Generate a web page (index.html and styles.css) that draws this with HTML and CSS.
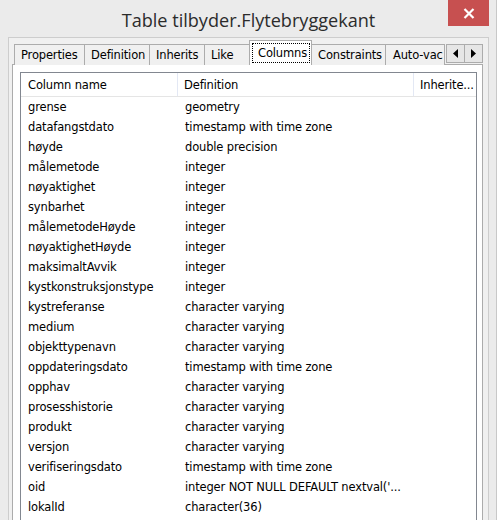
FILE: index.html
```html
<!DOCTYPE html>
<html>
<head>
<meta charset="utf-8">
<link rel="stylesheet" href="styles.css">
</head>
<body>
<div class="window">
  <div class="titlebar">
    <div class="title">Table tilbyder.Flytebryggekant</div>
    <div class="close">
      <svg width="12" height="11" viewBox="0 0 12 11"><path d="M1.5 1 L10.5 10 M10.5 1 L1.5 10" stroke="#fff" stroke-width="2.2" fill="none"/></svg>
    </div>
  </div>
  <div class="client">
    <div class="tabs">
      <div class="tab w-prop">Properties</div>
      <div class="tab w-def">Definition</div>
      <div class="tab w-inh">Inherits</div>
      <div class="tab w-like">Like</div>
      <div class="tab active"><span class="focus">Columns</span></div>
      <div class="tab w-con">Constraints</div>
      <div class="tab w-auto">Auto-vac</div>
      <div class="scroller">
        <div class="sbtn"><svg width="5" height="9" viewBox="0 0 5 9"><path d="M5 0 L0 4.5 L5 9Z" fill="#000"/></svg></div>
        <div class="sbtn"><svg width="5" height="9" viewBox="0 0 5 9"><path d="M0 0 L5 4.5 L0 9Z" fill="#000"/></svg></div>
      </div>
    </div>
    <div class="panel">
      <div class="list">
        <div class="header">
          <div class="hcell c1">Column name</div>
          <div class="hcell c2">Definition</div>
          <div class="hcell c3">Inherite...</div>
        </div>
        <div class="row"><div class="c1">grense</div><div class="c2">geometry</div></div>
        <div class="row"><div class="c1">datafangstdato</div><div class="c2">timestamp with time zone</div></div>
        <div class="row"><div class="c1">høyde</div><div class="c2">double precision</div></div>
        <div class="row"><div class="c1">målemetode</div><div class="c2">integer</div></div>
        <div class="row"><div class="c1">nøyaktighet</div><div class="c2">integer</div></div>
        <div class="row"><div class="c1">synbarhet</div><div class="c2">integer</div></div>
        <div class="row"><div class="c1">målemetodeHøyde</div><div class="c2">integer</div></div>
        <div class="row"><div class="c1">nøyaktighetHøyde</div><div class="c2">integer</div></div>
        <div class="row"><div class="c1">maksimaltAvvik</div><div class="c2">integer</div></div>
        <div class="row"><div class="c1">kystkonstruksjonstype</div><div class="c2">integer</div></div>
        <div class="row"><div class="c1">kystreferanse</div><div class="c2">character varying</div></div>
        <div class="row"><div class="c1">medium</div><div class="c2">character varying</div></div>
        <div class="row"><div class="c1">objekttypenavn</div><div class="c2">character varying</div></div>
        <div class="row"><div class="c1">oppdateringsdato</div><div class="c2">timestamp with time zone</div></div>
        <div class="row"><div class="c1">opphav</div><div class="c2">character varying</div></div>
        <div class="row"><div class="c1">prosesshistorie</div><div class="c2">character varying</div></div>
        <div class="row"><div class="c1">produkt</div><div class="c2">character varying</div></div>
        <div class="row"><div class="c1">versjon</div><div class="c2">character varying</div></div>
        <div class="row"><div class="c1">verifiseringsdato</div><div class="c2">timestamp with time zone</div></div>
        <div class="row"><div class="c1">oid</div><div class="c2">integer NOT NULL DEFAULT nextval('...</div></div>
        <div class="row"><div class="c1">lokalId</div><div class="c2">character(36)</div></div>
        <div class="row"><div class="c1"></div><div class="c2"></div></div>
      </div>
    </div>
  </div>
</div>
</body>
</html>
```

FILE: styles.css
```css
* { box-sizing: border-box; }
html, body { margin: 0; padding: 0; }
body {
  width: 497px;
  height: 520px;
  overflow: hidden;
  background: #ebebeb;
  font-family: "DejaVu Sans", Tahoma, sans-serif;
  font-size: 11.5px;
  letter-spacing: -0.15px;
  color: #000;
}
.window {
  width: 497px;
  height: 520px;
  display: flex;
  flex-direction: column;
  border-right: 1px solid #c8c8c8;
  overflow: hidden;
}
.titlebar {
  position: relative;
  height: 37px;
  flex: none;
  display: flex;
  justify-content: center;
  align-items: center;
}
.title {
  font-family: "Open Sans", "Noto Sans", sans-serif;
  font-size: 18.1px;
  letter-spacing: 0;
  color: #2b2b2b;
  margin-top: 2px;
  margin-left: 1px;
}
.close {
  position: absolute;
  left: 448px;
  top: 0;
  width: 41px;
  height: 26px;
  background: #c75050;
  display: flex;
  align-items: center;
  justify-content: center;
}
.client {
  flex: 1;
  margin-left: 8px;
  width: 481px;
  border-left: 1px solid #cdcdcd;
  border-top: 1px solid #cdcdcd;
  border-right: 1px solid #cdcdcd;
  background: #f0f0f0;
  padding: 2px 5px 0 3px;
  display: flex;
  flex-direction: column;
  min-height: 0;
}
.tabs {
  display: flex;
  align-items: flex-end;
  height: 25px;
  padding-left: 2px;
  flex: none;
  position: relative;
  z-index: 2;
  overflow: hidden;
}
.tab {
  height: 21px;
  border: 1px solid #acacac;
  border-bottom: none;
  margin-right: -1px;
  background: #f0f0f0;
  padding: 3px 0 0 6px;
  white-space: nowrap;
  overflow: hidden;
  flex: none;
}
.w-prop { width: 71px; }
.w-def { width: 66px; }
.w-inh { width: 56px; }
.w-like { width: 48px; }
.w-con { width: 76px; padding-left: 7px; }
.w-auto { width: 60px; padding-left: 7px; }
.tab.active {
  width: 63px;
  margin-left: -2px;
  margin-right: -2px;
  background: #fff;
  padding: 2px 1px 0 2px;
  position: relative;
  z-index: 3;
  height: 25px;
}
.focus {
  display: block;
  border: 1px dotted #000;
  height: 20px;
  padding: 2px 0 0 5px;
}
.scroller {
  position: absolute;
  left: 434px;
  top: 4px;
  display: flex;
  background: #f0f0f0;
}
.sbtn {
  width: 19px;
  height: 19px;
  border: 1px solid #acacac;
  margin-right: -1px;
  background: #e6e6e6;
  display: flex;
  align-items: center;
  justify-content: center;
}
.panel {
  flex: 1;
  border: 1px solid #acacac;
  border-bottom: none;
  background: #fff;
  margin-top: -1px;
  padding: 7px 5px 0 7px;
  min-height: 0;
  overflow: hidden;
  width: 471px;
}
.list {
  border: 1px solid #828790;
  border-bottom: none;
  height: 100%;
  background: #fff;
  overflow: hidden;
}
.header {
  display: flex;
  height: 24px;
  border-bottom: 1px solid #e5e5e5;
  align-items: stretch;
}
.hcell {
  padding: 5px 0 0 7px;
  border-right: 1px solid #e3e8f4;
  white-space: nowrap;
  overflow: hidden;
}
.header .c3 { border-right: none; padding-left: 6px; }
.c1 { width: 157px; flex: none; padding-left: 7px; }
.c2 { width: 236px; flex: none; padding-left: 6px; }
.c3 { flex: 1; }
.row {
  display: flex;
  height: 20px;
  align-items: center;
  white-space: nowrap;
}
.row .c1 { padding-left: 7px; }
.row .c2 { padding-left: 7px; overflow: hidden; }
```
